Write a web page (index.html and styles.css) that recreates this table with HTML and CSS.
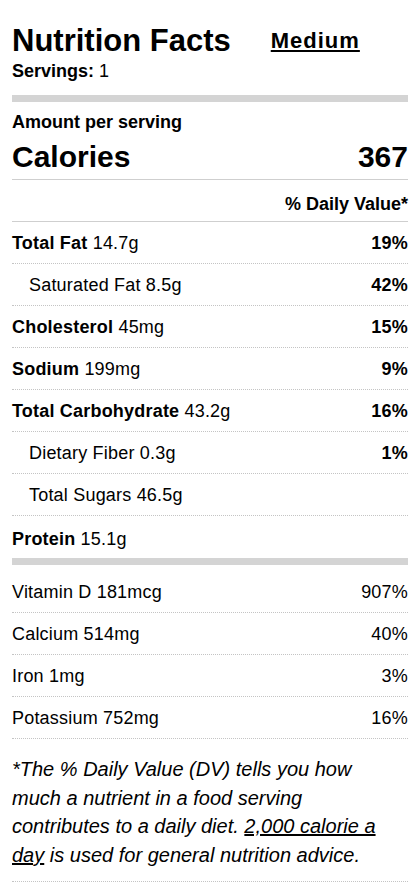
FILE: index.html
```html
<!DOCTYPE html>
<html lang="en">
<head>
    <meta charset="UTF-8">
    <meta name="viewport" content="width=device-width, initial-scale=1.0">
    <title>Nutrition Facts</title>
    <link rel="stylesheet" href="styles.css">
</head>
<body>
    <div class="label">
        <!-- Header -->
        <div class="label-head">
            <h1 class="title">Nutrition Facts</h1>
            <a href="#" class="size-link">Medium</a>
        </div>
        <div class="servings"><b>Servings:</b> 1</div>
        <div class="bar"></div>

        <!-- Calories -->
        <div class="amount">Amount per serving</div>
        <div class="calories">
            <span>Calories</span>
            <span>367</span>
        </div>
        <div class="dv-head">% Daily Value*</div>

        <!-- Main nutrients -->
        <div class="row"><span><b>Total Fat</b> 14.7g</span><b>19%</b></div>
        <div class="row sub"><span>Saturated Fat 8.5g</span><b>42%</b></div>
        <div class="row"><span><b>Cholesterol</b> 45mg</span><b>15%</b></div>
        <div class="row"><span><b>Sodium</b> 199mg</span><b>9%</b></div>
        <div class="row"><span><b>Total Carbohydrate</b> 43.2g</span><b>16%</b></div>
        <div class="row sub"><span>Dietary Fiber 0.3g</span><b>1%</b></div>
        <div class="row sub"><span>Total Sugars 46.5g</span></div>
        <div class="row last"><span><b>Protein</b> 15.1g</span></div>
        <div class="bar bar-low"></div>

        <!-- Vitamins and minerals -->
        <div class="row vit"><span>Vitamin D 181mcg</span><span>907%</span></div>
        <div class="row"><span>Calcium 514mg</span><span>40%</span></div>
        <div class="row"><span>Iron 1mg</span><span>3%</span></div>
        <div class="row"><span>Potassium 752mg</span><span>16%</span></div>

        <p class="note">*The % Daily Value (DV) tells you how much a nutrient in a food serving contributes to a daily diet. <a href="#">2,000 calorie a day</a> is used for general nutrition advice.</p>
    </div>
</body>
</html>
```

FILE: styles.css
```css
* {
    margin: 0;
    padding: 0;
    box-sizing: border-box;
}
body {
    background: #fff;
    color: #000;
    font-family: "Liberation Sans", Arial, sans-serif;
}
.label {
    padding: 23px 8px 0 12px;
}
/* Header */
.label-head {
    display: flex;
    align-items: flex-start;
    gap: 40px;
}
.title {
    font-size: 31px;
    line-height: 36px;
    font-weight: bold;
}
.size-link {
    font-size: 22px;
    line-height: 26px;
    font-weight: bold;
    letter-spacing: 1px;
    color: #000;
    margin-top: 5px;
    text-decoration-thickness: 2px;
    text-underline-offset: 2px;
}
.servings {
    font-size: 18px;
    line-height: 22px;
    margin-top: 1px;
}
.bar {
    height: 7px;
    background-color: #d4d4d4;
    margin-top: 13px;
}
.bar-low {
    margin-top: 0;
}
/* Calories */
.amount {
    font-size: 18px;
    line-height: 22px;
    font-weight: bold;
    margin-top: 9px;
}
.calories {
    display: flex;
    justify-content: space-between;
    font-size: 30px;
    line-height: 34px;
    font-weight: bold;
    margin-top: 7px;
    padding-bottom: 5px;
    border-bottom: 1px solid #cfcfcf;
}
.dv-head {
    font-size: 18px;
    line-height: 22px;
    font-weight: bold;
    text-align: right;
    padding: 13px 0 6px;
    border-bottom: 1px solid #cfcfcf;
}
/* Rows */
.row {
    display: flex;
    justify-content: space-between;
    font-size: 18px;
    line-height: 22px;
    letter-spacing: 0.2px;
    padding: 10px 0 9px;
    border-bottom: 1px dotted #c4c4c4;
}
.row.sub {
    padding-left: 17px;
}
.row.last {
    border-bottom: none;
    padding: 12px 0 8px;
}
.row.vit {
    padding-top: 16px;
}
.note {
    font-size: 20px;
    line-height: 28.7px;
    font-style: italic;
    padding: 16px 16px 11px 0;
    border-bottom: 1px dotted #c4c4c4;
}
.note a {
    color: #000;
}
```
